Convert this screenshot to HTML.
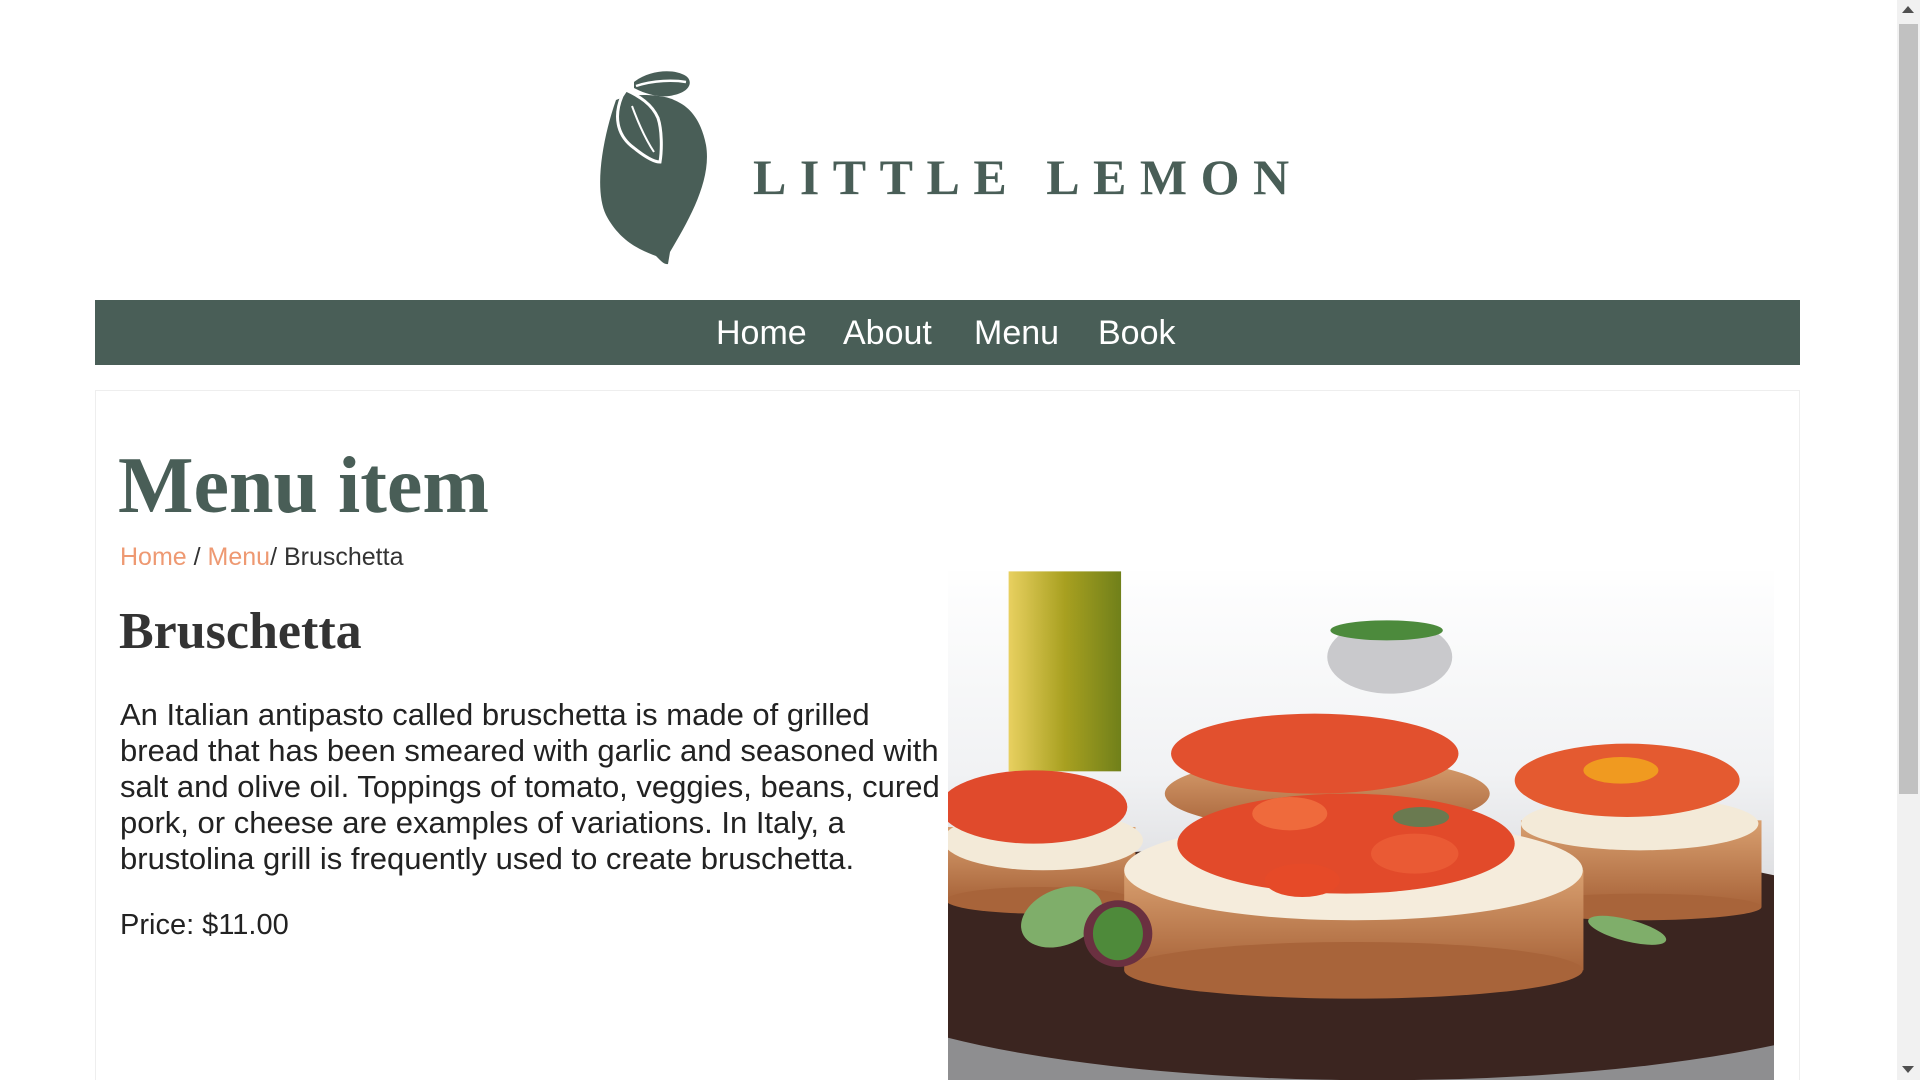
<!DOCTYPE html>
<html><head><meta charset="utf-8"><style>
html,body{margin:0;padding:0;width:1920px;height:1080px;overflow:hidden;background:#fff;font-family:"Liberation Sans",sans-serif;}
.a{position:absolute;white-space:nowrap;}
</style></head><body>
<svg class="a" style="left:594px;top:70px" width="120" height="196" viewBox="0 0 120 196">
<path d="M22 30 C8 70 0 120 12 145 C25 170 45 180 62 186 C66 190 70 195 74 194 L76 182 C95 150 118 110 112 75 C106 45 92 35 80 30 C70 25 40 22 22 30 Z" fill="#495e57"/>
<path d="M40 12 C55 0 80 -2 92 6 C100 12 95 22 80 25 C70 28 55 26 40 18 Z" fill="#495e57"/>
<path d="M42 16 C60 10 80 10 92 12" stroke="#fff" stroke-width="2.5" fill="none"/>
<path d="M28 26 C20 45 22 65 40 78 C50 86 60 92 66 92 C68 80 68 60 64 48 C58 34 45 26 32 20 Z" stroke="#fff" stroke-width="3" fill="#495e57"/>
<path d="M38 36 C45 55 52 70 60 82" stroke="#fff" stroke-width="2" fill="none"/>
</svg>
<div class="a" style="left:753px;top:152px;font:bold 50px/1 'Liberation Serif',serif;letter-spacing:13.5px;color:#495e57">LITTLE LEMON</div>
<div class="a" style="left:95px;top:300px;width:1705px;height:65px;background:#495e57"></div>
<div class="a" style="left:716px;top:313px;font-size:34px;line-height:40px;color:#fff">Home</div>
<div class="a" style="left:843px;top:313px;font-size:34px;line-height:40px;color:#fff">About</div>
<div class="a" style="left:974px;top:313px;font-size:34px;line-height:40px;color:#fff">Menu</div>
<div class="a" style="left:1098px;top:313px;font-size:34px;line-height:40px;color:#fff">Book</div>
<div class="a" style="left:95px;top:390px;width:1703px;height:689px;border:1px solid #eee;border-bottom:none"></div>
<div class="a" style="left:118px;top:441px;font:bold 80px/90px 'Liberation Serif',serif;color:#495e57">Menu item</div>
<div class="a" style="left:120px;top:542px;font-size:25px;line-height:30px;color:#333"><span style="color:#ee9972">Home</span> / <span style="color:#ee9972">Menu</span>/ Bruschetta</div>
<div class="a" style="left:119px;top:602px;font:bold 52px/60px 'Liberation Serif',serif;color:#333">Bruschetta</div>
<div class="a" style="left:120px;top:697px;font-size:31px;line-height:36px;color:#222">An Italian antipasto called bruschetta is made of grilled<br>bread that has been smeared with garlic and seasoned with<br>salt and olive oil. Toppings of tomato, veggies, beans, cured<br>pork, or cheese are examples of variations. In Italy, a<br>brustolina grill is frequently used to create bruschetta.</div>
<div class="a" style="left:120px;top:907px;font-size:29px;line-height:36px;color:#222">Price: $11.00</div>
<svg class="a" style="left:948px;top:571px" width="826" height="509" viewBox="13 17 1322 815" preserveAspectRatio="none">
<defs>
<linearGradient id="bg" x1="0" y1="0" x2="0" y2="1"><stop offset="0" stop-color="#fff"/><stop offset=".4" stop-color="#f1f2f4"/><stop offset="1" stop-color="#b8b8bc"/></linearGradient>
<linearGradient id="bt" x1="0" y1="0" x2="1" y2="0"><stop offset="0" stop-color="#e8d060"/><stop offset=".5" stop-color="#a8a020"/><stop offset="1" stop-color="#70801a"/></linearGradient>
<linearGradient id="br" x1="0" y1="0" x2="0" y2="1"><stop offset="0" stop-color="#d9a070"/><stop offset="1" stop-color="#a8643a"/></linearGradient>
</defs>
<g transform="scale(1,0.5336)">
<rect x="0" y="0" width="1400" height="1600" fill="url(#bg)"/>
<rect x="0" y="1400" width="1400" height="200" fill="#8e8e90"/>
<rect x="110" y="33" width="180" height="600" fill="url(#bt)"/>
<ellipse cx="720" cy="290" rx="100" ry="110" fill="#c9c9cc"/>
<ellipse cx="715" cy="210" rx="90" ry="30" fill="#4c8a3c"/>
<ellipse cx="700" cy="1200" rx="900" ry="360" fill="#3b2520"/>
<ellipse cx="620" cy="700" rx="260" ry="110" fill="url(#br)"/>
<ellipse cx="600" cy="580" rx="230" ry="120" fill="#e2502e"/>
<rect x="13" y="800" width="300" height="220" fill="url(#br)"/>
<ellipse cx="160" cy="1020" rx="150" ry="40" fill="#a8643a"/>
<ellipse cx="165" cy="840" rx="160" ry="90" fill="#f3ead8"/>
<ellipse cx="150" cy="740" rx="150" ry="110" fill="#e04a2c"/>
<rect x="930" y="780" width="385" height="260" fill="url(#br)"/>
<ellipse cx="1120" cy="1040" rx="195" ry="40" fill="#a8643a"/>
<ellipse cx="1120" cy="790" rx="190" ry="80" fill="#f3ead8"/>
<ellipse cx="1100" cy="660" rx="180" ry="110" fill="#e45a30"/>
<ellipse cx="1090" cy="630" rx="60" ry="40" fill="#f09a20"/>
<rect x="295" y="930" width="735" height="300" fill="url(#br)"/>
<ellipse cx="662" cy="1230" rx="367" ry="85" fill="#a8643a"/>
<ellipse cx="662" cy="930" rx="367" ry="150" fill="#f5ecdc"/>
<ellipse cx="650" cy="850" rx="270" ry="150" fill="#e24a2a"/>
<ellipse cx="560" cy="760" rx="60" ry="50" fill="#ef6a3c"/>
<ellipse cx="760" cy="880" rx="70" ry="60" fill="#ea5a34"/>
<ellipse cx="580" cy="960" rx="60" ry="50" fill="#e64a28"/>
<ellipse cx="770" cy="770" rx="45" ry="30" fill="#6a7a50"/>
<ellipse cx="195" cy="1070" rx="60" ry="95" fill="#7fae6a" transform="rotate(20 195 1070)"/>
<ellipse cx="285" cy="1120" rx="55" ry="100" fill="#6a3040"/>
<ellipse cx="285" cy="1120" rx="40" ry="80" fill="#4e8a3a"/>
<ellipse cx="1100" cy="1110" rx="70" ry="30" fill="#7fae6a" transform="rotate(30 1100 1110)"/>
</g>
</svg>
<div class="a" style="left:1897px;top:0;width:23px;height:1080px;background:#f1f1f1"></div>
<div class="a" style="left:1899px;top:24px;width:19px;height:770px;background:#c1c1c1"></div>
<div class="a" style="left:1902px;top:6px;width:0;height:0;border-left:6px solid transparent;border-right:6px solid transparent;border-bottom:7px solid #505050"></div>
<div class="a" style="left:1902px;top:1066px;width:0;height:0;border-left:6px solid transparent;border-right:6px solid transparent;border-top:7px solid #505050"></div>
</body></html>
